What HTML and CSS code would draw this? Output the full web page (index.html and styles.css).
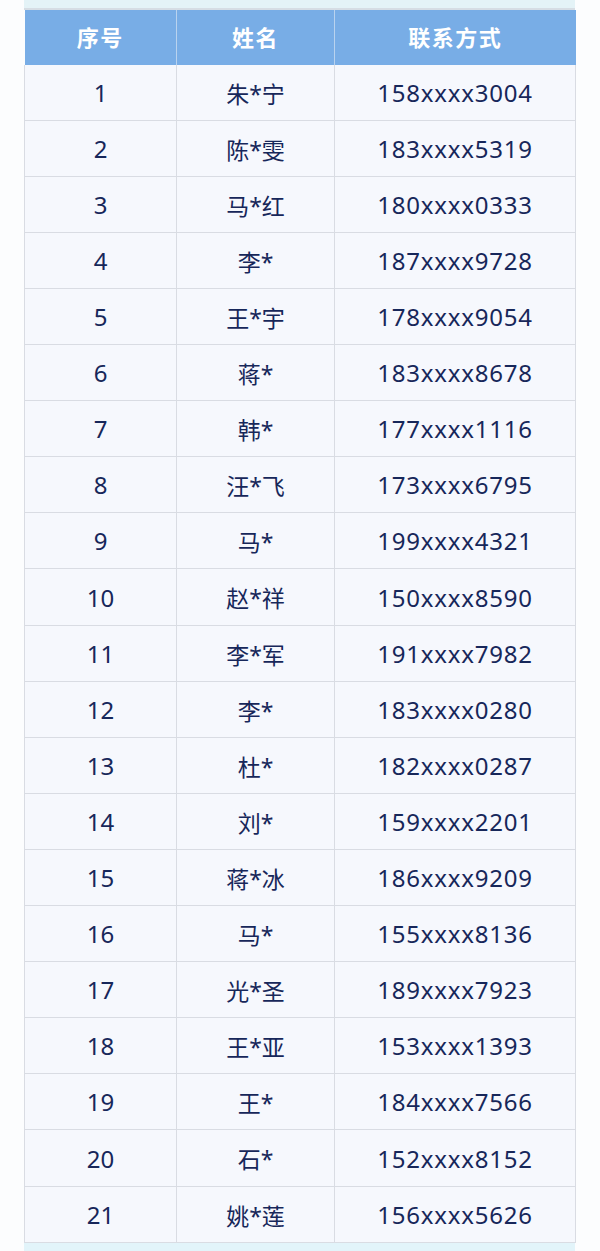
FILE: index.html
```html
<!DOCTYPE html>
<html lang="zh">
<head>
<meta charset="utf-8">
<link rel="stylesheet" href="styles.css">
</head>
<body>
<div class="wrap">
  <div class="strip top"></div>
  <table class="list">
    <thead>
      <tr><th class="c1">序号</th><th class="c2">姓名</th><th class="c3">联系方式</th></tr>
    </thead>
    <tbody>
      <tr><td>1</td><td>朱*宁</td><td>158xxxx3004</td></tr>
      <tr><td>2</td><td>陈*雯</td><td>183xxxx5319</td></tr>
      <tr><td>3</td><td>马*红</td><td>180xxxx0333</td></tr>
      <tr><td>4</td><td>李*</td><td>187xxxx9728</td></tr>
      <tr><td>5</td><td>王*宇</td><td>178xxxx9054</td></tr>
      <tr><td>6</td><td>蒋*</td><td>183xxxx8678</td></tr>
      <tr><td>7</td><td>韩*</td><td>177xxxx1116</td></tr>
      <tr><td>8</td><td>汪*飞</td><td>173xxxx6795</td></tr>
      <tr><td>9</td><td>马*</td><td>199xxxx4321</td></tr>
      <tr><td>10</td><td>赵*祥</td><td>150xxxx8590</td></tr>
      <tr><td>11</td><td>李*军</td><td>191xxxx7982</td></tr>
      <tr><td>12</td><td>李*</td><td>183xxxx0280</td></tr>
      <tr><td>13</td><td>杜*</td><td>182xxxx0287</td></tr>
      <tr><td>14</td><td>刘*</td><td>159xxxx2201</td></tr>
      <tr><td>15</td><td>蒋*冰</td><td>186xxxx9209</td></tr>
      <tr><td>16</td><td>马*</td><td>155xxxx8136</td></tr>
      <tr><td>17</td><td>光*圣</td><td>189xxxx7923</td></tr>
      <tr><td>18</td><td>王*亚</td><td>153xxxx1393</td></tr>
      <tr><td>19</td><td>王*</td><td>184xxxx7566</td></tr>
      <tr><td>20</td><td>石*</td><td>152xxxx8152</td></tr>
      <tr><td>21</td><td>姚*莲</td><td>156xxxx5626</td></tr>
    </tbody>
  </table>
  <div class="strip bottom"></div>
</div>
</body>
</html>
```
FILE: styles.css
```css
html, body {
  margin: 0;
  padding: 0;
  background: #fcfdfe;
}
body {
  font-family: "Noto Sans", "Noto Sans CJK SC", sans-serif;
}
.wrap {
  margin-left: 24px;
  width: 551px;
}
.strip.top {
  height: 8px;
  background: #e4f3f7;
  border-bottom: 2px solid #d6dde4;
}
.strip.bottom {
  height: 9px;
  background: #e2f4fa;
}
.list {
  width: 551px;
  border-collapse: collapse;
  table-layout: fixed;
}
.list th {
  height: 55px;
  padding: 0 0 3px;
  box-sizing: border-box;
  background: #78ade6;
  color: #ffffff;
  font-weight: 700;
  font-size: 22px;
  letter-spacing: 1.5px;
  border-left: 1px solid #b9d3ef;
  text-align: center;
}
.list th:first-child { border-left: none; }
.list .c1 { width: 152px; }
.list .c2 { width: 158px; }
.list .c3 { width: 241px; }
.list td {
  height: 55px;
  padding: 0;
  background: #f6f8fd;
  color: #17275a;
  font-size: 23px;
  text-align: center;
  border: 1px solid #d9dce3;
  border-top: none;
}
.list tbody tr:nth-child(10n) td {
  height: 56px;
}
.list td:nth-child(3) {
  font-size: 24px;
  letter-spacing: 0.8px;
}
.list td:first-child {
  font-size: 24px;
}
```
